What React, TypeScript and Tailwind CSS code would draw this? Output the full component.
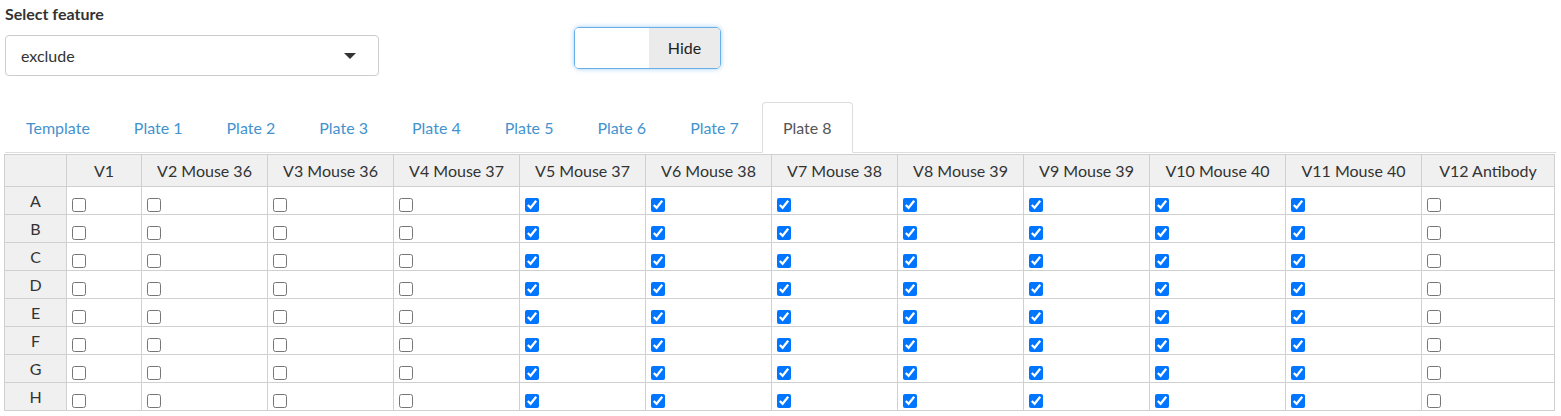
import { useState } from 'react';

const COLS = [
  { label: 'V1', w: 75, on: false },
  { label: 'V2 Mouse 36', w: 126, on: false },
  { label: 'V3 Mouse 36', w: 126, on: false },
  { label: 'V4 Mouse 37', w: 126, on: false },
  { label: 'V5 Mouse 37', w: 126, on: true },
  { label: 'V6 Mouse 38', w: 126, on: true },
  { label: 'V7 Mouse 38', w: 126, on: true },
  { label: 'V8 Mouse 39', w: 126, on: true },
  { label: 'V9 Mouse 39', w: 126, on: true },
  { label: 'V10 Mouse 40', w: 136, on: true },
  { label: 'V11 Mouse 40', w: 136, on: true },
  { label: 'V12 Antibody', w: 133, on: false },
];

const ROWS = ['A', 'B', 'C', 'D', 'E', 'F', 'G', 'H'];

const TABS = ['Template', 'Plate 1', 'Plate 2', 'Plate 3', 'Plate 4', 'Plate 5', 'Plate 6', 'Plate 7', 'Plate 8'];

export default function App() {
  const [grid, setGrid] = useState(() => ROWS.map(() => COLS.map(c => c.on)));
  const [tab, setTab] = useState('Plate 8');

  const toggle = (r: number, c: number) =>
    setGrid(g => g.map((row, i) => (i === r ? row.map((v, j) => (j === c ? !v : v)) : row)));

  return (
    <div className="bg-white text-[#333] font-['Lato','Liberation_Sans',sans-serif] pl-[4px] pr-[5px] pt-[4px]">
      <div className="flex items-start">
        <div className="w-[374px] ml-[1px]">
          <label className="block text-[16px] font-bold leading-[20px] mb-[11px]">Select feature</label>
          <div className="h-[41px] border border-[#ccc] rounded-[4px] flex items-center justify-between pl-[15px] pr-[22px] text-[16px]">
            <span>exclude</span>
            <span className="w-0 h-0 border-l-[6px] border-r-[6px] border-t-[6px] border-l-transparent border-r-transparent border-t-[#333]" />
          </div>
        </div>
        <div className="ml-[195px] mt-[23px] flex w-[147px] h-[42px] rounded-[5px] border border-[#66afe9] shadow-[0_0_5px_rgba(102,175,233,0.6)] overflow-hidden">
          <div className="w-[74px] bg-white" />
          <div className="flex-1 bg-[#ebebeb] flex items-center justify-center text-[16px] text-[#222]">Hide</div>
        </div>
      </div>

      <div className="mt-[26px] flex border-b border-[#ddd] ml-[1px]">
        {TABS.map(t => (
          <button
            key={t}
            onClick={() => setTab(t)}
            className={
              t === tab
                ? 'mr-[2px] -mb-px h-[51px] px-[20px] text-[16px] text-[#555] bg-white border border-[#ddd] border-b-white rounded-t-[4px]'
                : 'mr-[2px] -mb-px h-[51px] px-[20px] text-[16px] text-[#4493cf] border border-transparent'
            }
          >
            {t}
          </button>
        ))}
      </div>

      <table className="mt-px border-collapse table-fixed text-[16px]" style={{ width: 1550 }}>
        <colgroup>
          <col style={{ width: 62 }} />
          {COLS.map(c => (
            <col key={c.label} style={{ width: c.w }} />
          ))}
        </colgroup>
        <thead>
          <tr className="h-[32px] bg-[#f0f0f0]">
            <th className="border border-[#d0d0d0] font-normal" />
            {COLS.map(c => (
              <th key={c.label} className="border border-[#d0d0d0] font-normal text-center whitespace-nowrap">
                {c.label}
              </th>
            ))}
          </tr>
        </thead>
        <tbody>
          {ROWS.map((r, i) => (
            <tr key={r} className="h-[28px]">
              <td className="border border-[#d0d0d0] bg-[#f0f0f0] text-center leading-none">{r}</td>
              {COLS.map((c, j) => (
                <td key={c.label} className="border border-[#d0d0d0] p-0 align-bottom">
                  <div className="pl-[5px] pb-[2px] flex items-end">
                    <input
                      type="checkbox"
                      checked={grid[i][j]}
                      onChange={() => toggle(i, j)}
                      className="w-[14px] h-[14px] m-0"
                    />
                  </div>
                </td>
              ))}
            </tr>
          ))}
        </tbody>
      </table>
    </div>
  );
}
